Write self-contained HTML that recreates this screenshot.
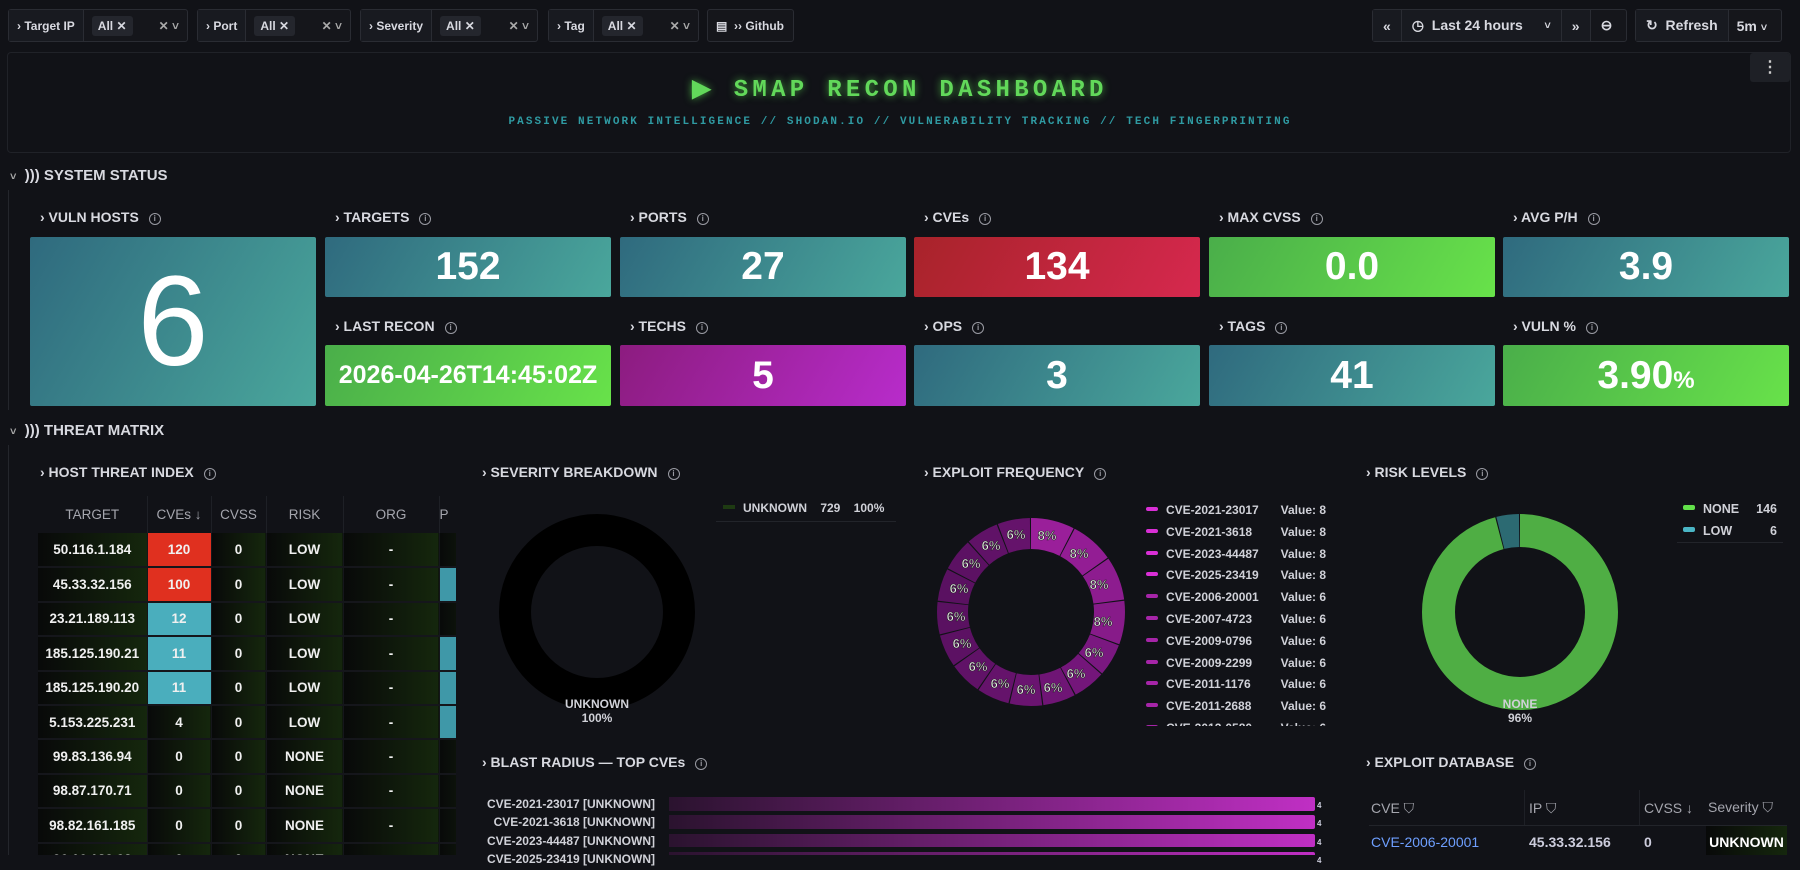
<!DOCTYPE html>
<html><head><meta charset="utf-8"><style>
*{box-sizing:border-box;margin:0;padding:0}
body{width:1800px;height:855px;overflow:hidden;background:#111217;font-family:"Liberation Sans",sans-serif;color:#ccccdc;position:relative}
.a{position:absolute}
.grp{position:absolute;top:9px;height:33px;border:1px solid #2a2c33;border-radius:3px;background:#15161b;font-size:12px;font-weight:bold;display:flex;align-items:center;color:#d8d9e0}
.grp .lab{height:100%;display:flex;align-items:center;padding:0 8px;border-right:1px solid #2a2c33;background:#181a20}
.chip{background:#24262d;border-radius:3px;padding:3px 6px;margin-left:8px;font-size:12px}
.xv{margin-left:auto;padding-right:8px;color:#aaa;font-size:12px}
.ttl{position:absolute;font-size:14px;font-weight:bold;color:#d8d9e0;white-space:nowrap}
.ttl i{font-style:normal;display:inline-block;width:12px;height:12px;border:1.3px solid #9a9ba3;border-radius:50%;font-size:8px;text-align:center;line-height:10px;color:#9a9ba3;margin-left:10px;vertical-align:1px}
.stat{position:absolute;display:flex;align-items:center;justify-content:center;color:#fff;font-size:39px;font-weight:bold;border-radius:2px}
.teal{background:linear-gradient(120deg,#2f6a7e,#4aa79c)}
.red{background:linear-gradient(120deg,#a8232a,#d6284e)}
.green{background:linear-gradient(120deg,#4aae4a,#68e24a)}
.purp{background:linear-gradient(120deg,#8c1c7f,#b82ccb)}
.sec{position:absolute;left:10px;font-size:15px;font-weight:bold;color:#d8d9e0}
table{border-collapse:collapse}
td,th{text-align:center;font-size:13.5px}
th{color:#a5a6ae;font-weight:normal;height:37px;border-right:1px solid #1e2026}
td{height:34.4px;font-weight:bold;color:#f0f0f0;background:linear-gradient(90deg,#080909,#15270d);border-bottom:2px solid #15161b;border-right:1px solid #15161b}
.lg{font-size:12px;font-weight:bold;color:#d0d1d8;white-space:nowrap}
.sw{display:inline-block;width:12px;height:4px;border-radius:2px;vertical-align:3px;margin-right:8px}
</style></head><body>

<div class="grp" style="left:8px;width:180px"><div class="lab">› Target IP</div><span class="chip">All ✕</span><span class="xv">✕ ˅</span></div>
<div class="grp" style="left:197px;width:154px"><div class="lab">› Port</div><span class="chip">All ✕</span><span class="xv">✕ ˅</span></div>
<div class="grp" style="left:360px;width:178px"><div class="lab">› Severity</div><span class="chip">All ✕</span><span class="xv">✕ ˅</span></div>
<div class="grp" style="left:548px;width:151px"><div class="lab">› Tag</div><span class="chip">All ✕</span><span class="xv">✕ ˅</span></div>
<div class="grp" style="left:707px;width:87px;padding-left:8px">▤&nbsp; ›› Github</div>

<div class="grp" style="left:1372px;width:255px;font-size:14px"><div class="lab" style="padding:0 10px">«</div><div class="lab" style="padding:0 10px;width:160px">◷&nbsp; Last 24 hours <span style="margin-left:auto;font-size:11px">˅</span></div><div class="lab" style="padding:0 10px">»</div><div style="padding:0 10px">⊖</div></div>
<div class="grp" style="left:1635px;width:147px;font-size:14px"><div class="lab" style="padding:0 10px">↻&nbsp; Refresh</div><div style="padding:0 8px">5m <span style="font-size:11px">˅</span></div></div>

<div class="a" style="left:7px;top:52px;width:1784px;height:101px;border:1px solid #202228;border-radius:4px"></div>
<div class="a" style="left:1750px;top:53px;width:40px;height:29px;background:#1e2026;border-radius:3px;text-align:center;line-height:29px;font-weight:bold;color:#ccc">⋮</div>
<div class="a" style="left:0;width:1800px;top:74px;text-align:center;font-family:'Liberation Mono',monospace;font-size:24px;font-weight:bold;color:#62d85a;letter-spacing:4.3px;text-shadow:0 0 8px rgba(90,220,80,.7)">▶ SMAP RECON DASHBOARD</div>
<div class="a" style="left:0;width:1800px;top:116px;text-align:center;font-family:'Liberation Mono',monospace;font-size:11px;font-weight:bold;color:#2f9aa2;letter-spacing:2.1px">PASSIVE NETWORK INTELLIGENCE // SHODAN.IO // VULNERABILITY TRACKING // TECH FINGERPRINTING</div>

<div class="sec" style="top:167px"><span style="font-size:11px;color:#aaa">˅</span>&nbsp; ))) SYSTEM STATUS</div>
<div class="a" style="left:8px;top:190px;width:1px;height:220px;background:#24262c"></div>

<div class="ttl" style="left:40px;top:209px">› VULN HOSTS<i>i</i></div>
<div class="ttl" style="left:335px;top:209px">› TARGETS<i>i</i></div>
<div class="ttl" style="left:630px;top:209px">› PORTS<i>i</i></div>
<div class="ttl" style="left:924px;top:209px">› CVEs<i>i</i></div>
<div class="ttl" style="left:1219px;top:209px">› MAX CVSS<i>i</i></div>
<div class="ttl" style="left:1513px;top:209px">› AVG P/H<i>i</i></div>
<div class="stat teal" style="left:30px;top:237px;width:286px;height:169px;font-size:128px;font-weight:normal">6</div>
<div class="stat teal" style="left:325px;top:237px;width:286px;height:60px">152</div>
<div class="stat teal" style="left:620px;top:237px;width:286px;height:60px">27</div>
<div class="stat red" style="left:914px;top:237px;width:286px;height:60px">134</div>
<div class="stat green" style="left:1209px;top:237px;width:286px;height:60px">0.0</div>
<div class="stat teal" style="left:1503px;top:237px;width:286px;height:60px">3.9</div>
<div class="ttl" style="left:335px;top:318px">› LAST RECON<i>i</i></div>
<div class="ttl" style="left:630px;top:318px">› TECHS<i>i</i></div>
<div class="ttl" style="left:924px;top:318px">› OPS<i>i</i></div>
<div class="ttl" style="left:1219px;top:318px">› TAGS<i>i</i></div>
<div class="ttl" style="left:1513px;top:318px">› VULN %<i>i</i></div>
<div class="stat green" style="left:325px;top:345px;width:286px;height:61px;font-size:25px">2026-04-26T14:45:02Z</div>
<div class="stat purp" style="left:620px;top:345px;width:286px;height:61px">5</div>
<div class="stat teal" style="left:914px;top:345px;width:286px;height:61px">3</div>
<div class="stat teal" style="left:1209px;top:345px;width:286px;height:61px">41</div>
<div class="stat green" style="left:1503px;top:345px;width:286px;height:61px">3.90<span style="font-size:24px;margin-top:10px">%</span></div>

<div class="sec" style="top:422px"><span style="font-size:11px;color:#aaa">˅</span>&nbsp; ))) THREAT MATRIX</div>
<div class="a" style="left:8px;top:445px;width:1px;height:410px;background:#24262c"></div>

<div class="ttl" style="left:40px;top:464px">› HOST THREAT INDEX<i>i</i></div>
<div class="a" style="left:38px;top:496px;width:418px;height:359px;overflow:hidden">
<table style="width:460px">
<tr><th style="width:109px">TARGET</th><th style="width:64px">CVEs ↓</th><th style="width:55px">CVSS</th><th style="width:77px">RISK</th><th style="width:96px">ORG</th><th style="text-align:left">P</th></tr>
<tr><td>50.116.1.184</td><td style="background:#e0301f">120</td><td>0</td><td>LOW</td><td>-</td><td></td></tr>
<tr><td>45.33.32.156</td><td style="background:#e0301f">100</td><td>0</td><td>LOW</td><td>-</td><td style="background:#3f98a8"></td></tr>
<tr><td>23.21.189.113</td><td style="background:#4aaebd">12</td><td>0</td><td>LOW</td><td>-</td><td></td></tr>
<tr><td>185.125.190.21</td><td style="background:#4aaebd">11</td><td>0</td><td>LOW</td><td>-</td><td style="background:#3f98a8"></td></tr>
<tr><td>185.125.190.20</td><td style="background:#4aaebd">11</td><td>0</td><td>LOW</td><td>-</td><td style="background:#3f98a8"></td></tr>
<tr><td>5.153.225.231</td><td>4</td><td>0</td><td>LOW</td><td>-</td><td style="background:#3f98a8"></td></tr>
<tr><td>99.83.136.94</td><td>0</td><td>0</td><td>NONE</td><td>-</td><td></td></tr>
<tr><td>98.87.170.71</td><td>0</td><td>0</td><td>NONE</td><td>-</td><td></td></tr>
<tr><td>98.82.161.185</td><td>0</td><td>0</td><td>NONE</td><td>-</td><td></td></tr>
<tr><td>96.16.189.92</td><td>0</td><td>0</td><td>NONE</td><td>-</td><td></td></tr>
</table></div>

<div class="ttl" style="left:482px;top:464px">› SEVERITY BREAKDOWN<i>i</i></div>
<div class="a lg" style="left:716px;top:501px;width:180px;height:21px;border-bottom:1px solid #22242a;padding-left:7px"><span class="sw" style="background:#1e3a12;border-radius:0"></span>UNKNOWN &nbsp;&nbsp; 729 &nbsp;&nbsp; 100%</div>
<svg class="a" style="left:497px;top:512px" width="200" height="200"><circle cx="100" cy="100" r="82" fill="none" stroke="#000" stroke-width="32"/></svg>
<div class="a lg" style="left:547px;top:697px;width:100px;text-align:center;line-height:14px">UNKNOWN<br>100%</div>

<div class="ttl" style="left:924px;top:464px">› EXPLOIT FREQUENCY<i>i</i></div>
<svg class="a" style="left:931px;top:512px" width="200" height="200">
<g transform="rotate(-90 100 100)" fill="none" stroke-width="31">
<circle cx="100" cy="100" r="78.5" stroke="#9a1f9a" stroke-dasharray="36.9 456.3" stroke-dashoffset="0"/>
<circle cx="100" cy="100" r="78.5" stroke="#931d94" stroke-dasharray="36.9 456.3" stroke-dashoffset="-37.94"/>
<circle cx="100" cy="100" r="78.5" stroke="#8d1c8f" stroke-dasharray="36.9 456.3" stroke-dashoffset="-75.88"/>
<circle cx="100" cy="100" r="78.5" stroke="#871b89" stroke-dasharray="36.9 456.3" stroke-dashoffset="-113.82"/>
<circle cx="100" cy="100" r="78.5" stroke="#7a1880" stroke-dasharray="27.4 465.8" stroke-dashoffset="-151.76"/>
<circle cx="100" cy="100" r="78.5" stroke="#74167a" stroke-dasharray="27.4 465.8" stroke-dashoffset="-180.21"/>
<circle cx="100" cy="100" r="78.5" stroke="#6f1575" stroke-dasharray="27.4 465.8" stroke-dashoffset="-208.66"/>
<circle cx="100" cy="100" r="78.5" stroke="#6a1470" stroke-dasharray="27.4 465.8" stroke-dashoffset="-237.11"/>
<circle cx="100" cy="100" r="78.5" stroke="#65136b" stroke-dasharray="27.4 465.8" stroke-dashoffset="-265.56"/>
<circle cx="100" cy="100" r="78.5" stroke="#601267" stroke-dasharray="27.4 465.8" stroke-dashoffset="-294.01"/>
<circle cx="100" cy="100" r="78.5" stroke="#5c1163" stroke-dasharray="27.4 465.8" stroke-dashoffset="-322.46"/>
<circle cx="100" cy="100" r="78.5" stroke="#5a1161" stroke-dasharray="27.4 465.8" stroke-dashoffset="-350.91"/>
<circle cx="100" cy="100" r="78.5" stroke="#5a1161" stroke-dasharray="27.4 465.8" stroke-dashoffset="-379.36"/>
<circle cx="100" cy="100" r="78.5" stroke="#5c1163" stroke-dasharray="27.4 465.8" stroke-dashoffset="-407.81"/>
<circle cx="100" cy="100" r="78.5" stroke="#601267" stroke-dasharray="27.4 465.8" stroke-dashoffset="-436.26"/>
<circle cx="100" cy="100" r="78.5" stroke="#65136b" stroke-dasharray="27.4 465.8" stroke-dashoffset="-464.71"/>
</g>
<g font-family="Liberation Sans" font-size="13" font-weight="bold" fill="#eee" text-anchor="middle" stroke="#222" stroke-width="0.6">
<text x="116" y="28">8%</text><text x="148" y="46">8%</text><text x="168" y="77">8%</text><text x="172" y="114">8%</text>
<text x="163" y="145">6%</text><text x="145" y="166">6%</text><text x="122" y="180">6%</text><text x="95" y="182">6%</text>
<text x="69" y="176">6%</text><text x="47" y="159">6%</text><text x="31" y="136">6%</text><text x="25" y="109">6%</text>
<text x="28" y="81">6%</text><text x="40" y="56">6%</text><text x="60" y="38">6%</text><text x="85" y="27">6%</text>
</g></svg>
<div class="a lg" style="left:1146px;top:500px;width:180px;height:226px;overflow:hidden;line-height:21.8px">
<div><span class="sw" style="background:#d92fd6"></span>CVE-2021-23017<span style="float:right">Value: 8</span></div>
<div><span class="sw" style="background:#d92fd6"></span>CVE-2021-3618<span style="float:right">Value: 8</span></div>
<div><span class="sw" style="background:#d92fd6"></span>CVE-2023-44487<span style="float:right">Value: 8</span></div>
<div><span class="sw" style="background:#d92fd6"></span>CVE-2025-23419<span style="float:right">Value: 8</span></div>
<div><span class="sw" style="background:#a625a8"></span>CVE-2006-20001<span style="float:right">Value: 6</span></div>
<div><span class="sw" style="background:#a625a8"></span>CVE-2007-4723<span style="float:right">Value: 6</span></div>
<div><span class="sw" style="background:#a625a8"></span>CVE-2009-0796<span style="float:right">Value: 6</span></div>
<div><span class="sw" style="background:#a625a8"></span>CVE-2009-2299<span style="float:right">Value: 6</span></div>
<div><span class="sw" style="background:#a625a8"></span>CVE-2011-1176<span style="float:right">Value: 6</span></div>
<div><span class="sw" style="background:#a625a8"></span>CVE-2011-2688<span style="float:right">Value: 6</span></div>
<div><span class="sw" style="background:#a625a8"></span>CVE-2012-0580<span style="float:right">Value: 6</span></div>
</div>

<div class="ttl" style="left:1366px;top:464px">› RISK LEVELS<i>i</i></div>
<div class="a lg" style="left:1677px;top:498px;width:106px;line-height:22px;border-bottom:1px solid #22242a;padding-left:6px;font-size:12.5px">
<div><span class="sw" style="height:5px;background:#62e04a"></span>NONE<span style="float:right;margin-right:6px">146</span></div>
<div><span class="sw" style="height:5px;background:#4ab5c5"></span>LOW<span style="float:right;margin-right:6px">6</span></div></div>
<svg class="a" style="left:1420px;top:512px" width="200" height="200">
<g transform="rotate(-90 100 100)" fill="none" stroke-width="33">
<circle cx="100" cy="100" r="81.5" stroke="#4fae44" stroke-dasharray="491 21"/>
<circle cx="100" cy="100" r="81.5" stroke="#2c6a72" stroke-dasharray="19 493" stroke-dashoffset="20"/>
</g></svg>
<div class="a lg" style="left:1470px;top:697px;width:100px;text-align:center;line-height:14px">NONE<br>96%</div>

<div class="ttl" style="left:482px;top:754px">› BLAST RADIUS — TOP CVEs<i>i</i></div>
<div class="a" style="left:460px;top:795px;width:195px;text-align:right;font-size:12px;font-weight:bold;color:#d0d1d8;line-height:18.3px;white-space:nowrap">CVE-2021-23017 [UNKNOWN]<br>CVE-2021-3618 [UNKNOWN]<br>CVE-2023-44487 [UNKNOWN]<br>CVE-2025-23419 [UNKNOWN]</div>
<div class="a" style="left:669px;top:797px;width:646px;height:58px;overflow:hidden">
<div style="height:13.5px;margin-bottom:4.8px;border-radius:0 2px 2px 0;background:linear-gradient(90deg,rgba(90,20,90,.35),#c02fc4)"></div>
<div style="height:13.5px;margin-bottom:4.8px;border-radius:0 2px 2px 0;background:linear-gradient(90deg,rgba(90,20,90,.35),#c02fc4)"></div>
<div style="height:13.5px;margin-bottom:4.8px;border-radius:0 2px 2px 0;background:linear-gradient(90deg,rgba(90,20,90,.35),#c02fc4)"></div>
<div style="height:13.5px;margin-bottom:4.8px;border-radius:0 2px 2px 0;background:linear-gradient(90deg,rgba(90,20,90,.35),#c02fc4)"></div>
</div>
<div class="a" style="left:1317px;top:797px;font-size:8px;font-weight:bold;line-height:18.3px">4<br>4<br>4<br>4</div>

<div class="ttl" style="left:1366px;top:754px">› EXPLOIT DATABASE<i>i</i></div>
<div class="a" style="left:1369px;top:790px;width:418px;height:65px;overflow:hidden;font-size:14px">
<div style="display:flex;height:36px;align-items:center;color:#a5a6ae;border-bottom:1px solid #22242a">
<div style="width:156px;padding-left:2px;border-right:1px solid #1e2026;height:100%;line-height:36px">CVE ⛉</div>
<div style="width:115px;padding-left:4px;border-right:1px solid #1e2026;height:100%;line-height:36px">IP ⛉</div>
<div style="width:66px;padding-left:4px;height:100%;line-height:36px">CVSS ↓</div>
<div style="padding-left:2px">Severity ⛉</div></div>
<div style="display:flex;height:32px;align-items:center;font-weight:bold">
<div style="width:156px;padding-left:2px;color:#6e9fff;font-weight:normal">CVE-2006-20001</div>
<div style="width:115px;padding-left:4px">45.33.32.156</div>
<div style="width:66px;padding-left:4px">0</div>
<div style="flex:1;height:100%;line-height:32px;text-align:center;color:#fff;background:linear-gradient(90deg,#080909,#15270d)">UNKNOWN</div></div>
</div>
</body></html>
